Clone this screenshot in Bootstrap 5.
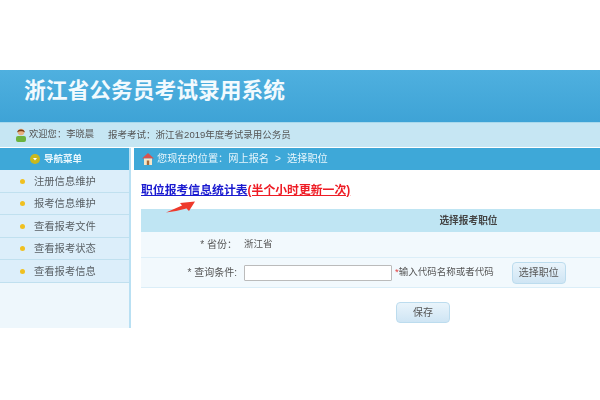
<!DOCTYPE html>
<html lang="zh">
<head>
<meta charset="utf-8">
<title>浙江省公务员考试录用系统</title>
<link rel="stylesheet" href="https://cdn.jsdelivr.net/npm/bootstrap@5.3.0/dist/css/bootstrap.min.css">
<style>
html,body{margin:0;background:#fff;overflow:hidden}
body{width:600px;height:400px;font-family:"Liberation Sans","Noto Sans CJK SC",sans-serif;font-size:9.5px;color:#555;padding-top:70px}
.shell{filter:blur(.6px)}
.banner{height:52px;background:linear-gradient(#4fb0df,#3ea3d6);padding:7px 0 0 24px}
.banner-title{font-size:21.75px;line-height:27px;font-weight:700;color:#f2fafe}
.userbar{height:25px;background:#c6e6f3;padding-left:15px;gap:2px;border-top:1px solid #a9d9ec}
.userbar .greet{font-size:9.3px}
.userbar .gapper{margin-left:12px}
.main{height:180px;margin-top:1px}
.sidenav{width:131px;background:#eef7fc;border-right:2px solid #b9e0f3}
.sidehead{height:22px;background:#3ea8d8;color:#eaf7fd;font-weight:700;font-size:9.5px;gap:4px;padding-right:17px}
.sideitem{height:22.5px;background:#dceefa;border-bottom:1px solid #c0e0ef;padding:1px 0 0 20px;gap:9px;font-size:10.3px;color:#5a6166}
.dot{width:5px;height:5px;border-radius:50%;background:#f0c020;flex:none}
.content{flex:1;padding-left:3px;min-width:0}
.crumb{height:22px;background:#3ea8d8;color:#e6f5fc;padding-left:8px;gap:3px;font-size:10.2px}
.crumb .sep{margin:0 6px}
.body-area{padding-left:7px}
.statline{height:39px;padding-top:13px;font-size:11.85px;font-weight:700;line-height:15px;position:relative}
.statline a{color:#1a1ad0}
.statline span{color:#ee1c25;text-decoration:underline}
.arrow{position:absolute;left:25px;top:30px}
.formhead{height:23px;background:#bfe5f3;color:#444;font-weight:700;font-size:9.7px;padding:1px 0 0 196px}
.frow{background:#f2f9fd;border-bottom:1px solid #dbeef8}
.frow.one{height:26px}
.frow.two{height:30px}
.flabel{width:99px;text-align:right;padding-right:3px;font-size:10px}
.fval{padding-left:4px;gap:3px}
.finput{width:148px;height:16px;background:#fff;border:1px solid #bbb;border-radius:1px;padding:0;display:block}
.req{color:#e04040}
.softbtn{background:linear-gradient(#e9f4fb,#cfe5f4);border:1px solid #bcdcee;border-radius:4px;color:#555;font-size:10px;padding:0;line-height:1;--bs-btn-hover-bg:#cfe5f4}
.pick{width:54px;height:22px;margin-left:15px}
.savewrap{padding:14px 0 0 255px}
.save{width:54px;height:21px}
.hint{white-space:nowrap}
</style>
</head>
<body>
<div class="shell">
  <header class="banner"><div class="banner-title">浙江省公务员考试录用系统</div></header>
  <div class="userbar d-flex align-items-center">
    <svg width="12" height="14" viewBox="0 0 12 14"><circle cx="6" cy="4" r="3.2" fill="#e8b080"/><path d="M2.2 4.6C1.8 .4 10.2 .4 9.8 4.6 8 2.8 4 2.8 2.2 4.6Z" fill="#7a3a10"/><rect x="1" y="8" width="10" height="6" rx="2" fill="#6cb33f"/></svg>
    <span class="greet">欢迎您：李晓晨</span><span class="gapper">报考考试：浙江省2019年度考试录用公务员</span>
  </div>
  <div class="main d-flex">
    <aside class="sidenav">
      <div class="sidehead d-flex align-items-center justify-content-center">
        <svg width="10" height="10" viewBox="0 0 10 10"><circle cx="5" cy="5" r="5" fill="#c9b81e"/><path d="M3 4h4L5 6.5Z" fill="#fff"/></svg>
        <span>导航菜单</span>
      </div>
      <div class="sideitem d-flex align-items-center"><i class="dot"></i><span>注册信息维护</span></div>
      <div class="sideitem d-flex align-items-center"><i class="dot"></i><span>报考信息维护</span></div>
      <div class="sideitem d-flex align-items-center"><i class="dot"></i><span>查看报考文件</span></div>
      <div class="sideitem d-flex align-items-center"><i class="dot"></i><span>查看报考状态</span></div>
      <div class="sideitem d-flex align-items-center"><i class="dot"></i><span>查看报考信息</span></div>
    </aside>
    <main class="content">
      <div class="crumb d-flex align-items-center">
        <svg width="12" height="12" viewBox="0 0 12 12"><path d="M6 0 12 5.5H0Z" fill="#d9534f"/><rect x="2" y="5.5" width="8" height="6.5" fill="#f6e6c8"/><rect x="4.8" y="7.5" width="2.4" height="4.5" fill="#a56a3a"/></svg>
        <span>您现在的位置：网上报名<span class="sep">&gt;</span>选择职位</span>
      </div>
      <div class="body-area">
        <div class="statline"><a href="#">职位报考信息统计表</a><span>(半个小时更新一次)</span>
          <svg class="arrow" width="30" height="14" viewBox="0 0 30 14"><path d="M0 12.5 16 5.5 14 3 29 1.5 23 11 20.5 8.5Q10 11.5 0 12.5Z" fill="#ee3a2c"/></svg>
        </div>
        <div class="formhead d-flex align-items-center justify-content-center">选择报考职位</div>
        <div class="frow one d-flex align-items-center"><div class="flabel">* 省份：</div><div class="fval">浙江省</div></div>
        <div class="frow two d-flex align-items-center"><div class="flabel">* 查询条件:</div>
          <div class="fval d-flex align-items-center"><input class="finput" type="text" aria-label="查询条件"><span class="hint"><span class="req">*</span>输入代码名称或者代码</span><button type="button" class="btn softbtn pick">选择职位</button></div></div>
        <div class="savewrap"><button type="button" class="btn softbtn save">保存</button></div>
      </div>
    </main>
  </div>
</div>
<script src="https://cdn.jsdelivr.net/npm/bootstrap@5.3.0/dist/js/bootstrap.bundle.min.js"></script>
</body>
</html>
